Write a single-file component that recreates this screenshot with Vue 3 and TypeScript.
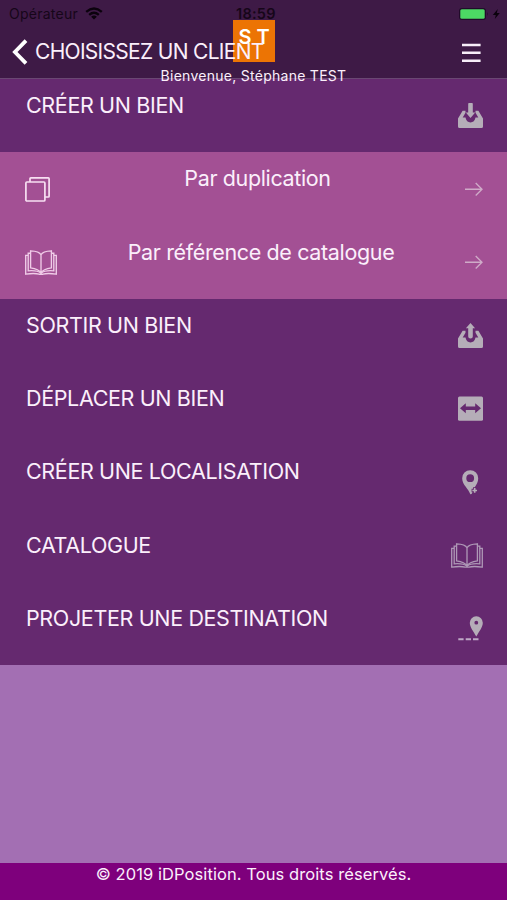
<script setup lang="ts">
type IconName = 'inbox' | 'outbox' | 'move' | 'pin' | 'book' | 'route'

interface SubItem {
  label: string
  icon: 'copy' | 'book'
}

interface MenuItem {
  label: string
  icon: IconName
  children?: SubItem[]
}

const items: MenuItem[] = [
  {
    label: 'CRÉER UN BIEN',
    icon: 'inbox',
    children: [
      { label: 'Par duplication', icon: 'copy' },
      { label: 'Par référence de catalogue', icon: 'book' },
    ],
  },
  { label: 'SORTIR UN BIEN', icon: 'outbox' },
  { label: 'DÉPLACER UN BIEN', icon: 'move' },
  { label: 'CRÉER UNE LOCALISATION', icon: 'pin' },
  { label: 'CATALOGUE', icon: 'book' },
  { label: 'PROJETER UNE DESTINATION', icon: 'route' },
]
</script>

<template>
  <div class="app">
    <header class="header">
      <div class="status">
        <span class="carrier">Opérateur</span>
        <svg class="wifi" width="18" height="13" viewBox="0 0 18 13" fill="none" stroke="#0b020d" stroke-width="2.4">
          <path d="M1.2 4.8Q9-1.8 16.8 4.8M4.2 7.8Q9 3.8 13.8 7.8" />
          <path d="M9 12.5 6.1 9.7Q9 7.4 11.9 9.7Z" fill="#0b020d" stroke="none" />
        </svg>
        <span class="time">18:59</span>
        <svg class="battery" width="45" height="14" viewBox="0 0 45 14">
          <rect x="2" y="1" width="27" height="12" rx="3" fill="#210b2a" />
          <rect x="3.3" y="2.3" width="24.4" height="9.4" rx="1.5" fill="#4cd964" />
          <path d="M30 5q1.5 2 0 4Z" fill="#210b2a" />
          <path d="m40.8 2-5 5.900h3l-1 4.200 5-6h-3Z" fill="#0b020d" />
        </svg>
      </div>
      <div class="nav">
        <svg class="back" width="16" height="26" viewBox="0 0 16 26" fill="none" stroke="#fff" stroke-width="3.8">
          <path d="M14 1.600 2.900 13 14 24.400" />
        </svg>
        <h1 class="title">CHOISISSEZ UN CLIENT</h1>
        <svg class="burger" width="19" height="20" viewBox="0 0 19 20" fill="#f8eef9">
          <path d="M0 .8h18.600v2.500H0zM0 8.600h18.600v2.500H0zM0 16.400h18.600v2.500H0z" />
        </svg>
      </div>
      <div class="avatar">S T</div>
      <p class="welcome">Bienvenue, Stéphane TEST</p>
    </header>

    <main class="menu">
      <template v-for="item in items" :key="item.label">
        <div class="row">
          <span class="label">{{ item.label }}</span>
          <svg v-if="item.icon === 'inbox' || item.icon === 'outbox'" class="icon" width="25" height="25" viewBox="0 0 25 25" fill="#b5adb8">
            <path d="M0 15.500 4.600 7.700h2.900v2.100L4.700 14.500H7.500C8 17.700 9.900 19.400 12.500 19.400S17 17.700 17.500 14.500h2.800L17.500 9.800V7.700h2.900L25 15.500v8q0 1.500-1.500 1.500h-22Q0 25 0 23.500Z" />
            <path v-if="item.icon === 'inbox'" d="M11 0h3q.8 0 .8.800v8.800h2.400L12.500 15 7.800 9.600h2.400V.8Q10.200 0 11 0Z" />
            <path v-else d="m12.500 0 4.600 5.300h-2.300v8.200q0 2-2.300 2t-2.300-2V5.300H7.900Z" />
          </svg>
          <svg v-else-if="item.icon === 'move'" class="icon" width="25" height="25" viewBox="0 0 25 25">
            <rect y=".4" width="25" height="24.400" rx="1.500" fill="#b5adb8" />
            <path d="m2 12.200 5.800-5v3.200h9.400V7.200l5.800 5-5.800 5V14H7.800v3.200Z" fill="#65296f" />
          </svg>
          <svg v-else-if="item.icon === 'pin'" class="icon pin" width="17" height="25" viewBox="0 0 17 25">
            <path fill="#b5adb8" fill-rule="evenodd" d="M8.200.2a8 8 0 0 1 8 8.200c0 3.500-1.800 6.200-3.400 8.800L9.600 24l-1.300.3C7 19 .2 14.700.2 8.400a8 8 0 0 1 8-8.200Zm0 4.100a3.900 3.900 0 1 0 0 7.800 3.900 3.900 0 0 0 0-7.800Z" />
            <path d="M12.700 17.300v6.300M9.600 20.450h6.200" stroke="#65296f" stroke-width="3.400" />
            <path d="M12.700 18.100v4.700M10.350 20.450h4.700" stroke="#b5adb8" stroke-width="1.600" />
          </svg>
          <svg v-else-if="item.icon === 'book'" class="icon" width="32" height="25" viewBox="0 0 32 25" fill="none" stroke="#ae98b6" stroke-width="1.300">
            <path d="M16 4.800C17.300 2 21.500 1 26.400.8v17C21.500 18.400 17.700 19.700 16 23 14.300 19.700 10.500 18.400 5.600 17.800V.8C10.500 1 14.700 2 16 4.800V23" />
            <path d="M5.600 3.200H3.200v17.600c5-.4 9.800-.2 12.800 2.400 3-2.600 7.800-2.800 12.800-2.400V3.200h-2.400" />
            <path d="M3.200 5.400H.7v18.700c5-.7 9.400-1.200 13.300.1h4c3.900-1.300 8.300-.8 13.300-.1V5.400h-2.500" />
          </svg>
          <svg v-else class="icon" width="25" height="25" viewBox="0 0 25 25">
            <path fill="#b5adb8" fill-rule="evenodd" d="M18.300.2a6.500 6.500 0 0 1 6.500 6.600c0 4.500-3.700 8.600-6.500 13.800-2.800-5.200-6.500-9.300-6.500-13.800A6.500 6.500 0 0 1 18.300.2Zm0 4.600a1.900 1.900 0 1 0 0 3.800 1.900 1.900 0 0 0 0-3.800Z" />
            <path d="M.3 23.300h5.300M7.700 23.300H13M15 23.300h5.500" stroke="#bea9c6" stroke-width="2" />
          </svg>
        </div>

        <div v-for="child in item.children" :key="child.label" class="row sub">
          <svg v-if="child.icon === 'copy'" class="icon" width="25" height="25" viewBox="0 0 25 25" fill="none" stroke="#f8dff2" stroke-width="1.700">
            <rect x=".9" y="5" width="19" height="19" rx="1" />
            <path d="M5 5V1.700q0-.8.800-.8h17.500q.8 0 .8.800v17.500q0 .8-.8.800H20" />
          </svg>
          <svg v-else class="icon" width="32" height="25" viewBox="0 0 32 25" fill="none" stroke="#f0cce8" stroke-width="1.350">
            <path d="M16 4.800C17.300 2 21.500 1 26.400.8v17C21.500 18.400 17.700 19.700 16 23 14.300 19.700 10.500 18.400 5.600 17.800V.8C10.500 1 14.700 2 16 4.800V23" />
            <path d="M5.600 3.200H3.200v17.600c5-.4 9.800-.2 12.800 2.400 3-2.600 7.800-2.800 12.800-2.400V3.200h-2.400" />
            <path d="M3.200 5.400H.7v18.700c5-.7 9.400-1.200 13.300.1h4c3.900-1.300 8.300-.8 13.300-.1V5.400h-2.500" />
          </svg>
          <span class="label">{{ child.label }}</span>
          <svg class="icon" width="18" height="25" viewBox="0 0 18 25" fill="none" stroke="#cfabc8" stroke-width="1.350">
            <path d="M0 12.200h17M10.700 5.900l6.300 6.300-6.300 6.300" />
          </svg>
        </div>
      </template>
    </main>

    <footer class="footer">© 2019 iDPosition. Tous droits réservés.</footer>
  </div>
</template>

<style>
body {
  margin: 0;
}
</style>

<style scoped>
.app {
  display: flex;
  flex-direction: column;
  height: 900px;
  overflow: hidden;
  background: #a36fb3;
  color: #fbeffb;
  font-family: Inter, "Liberation Sans", sans-serif;
}

.header {
  position: relative;
  flex: none;
  box-sizing: border-box;
  height: 79px;
  background: #3e1a46;
  border-bottom: 1px solid #6a4773;
}

.status {
  display: flex;
  align-items: center;
  height: 27px;
  padding: 0 5px 0 9px;
  color: #160619;
  font-size: 14px;
  letter-spacing: 0.25px;
}

.wifi {
  margin-left: 7px;
}

.time {
  position: absolute;
  left: 236px;
  top: 5px;
  line-height: 18px;
  font-size: 14.500px;
  font-weight: 600;
}

.battery {
  margin-left: auto;
}

.nav {
  display: flex;
  align-items: center;
  height: 50px;
  padding: 0 26px 0 12px;
}

.title {
  position: relative;
  z-index: 2;
  margin: 0 0 0 7px;
  font-size: 21px;
  font-weight: 400;
  line-height: 30px;
  letter-spacing: -0.7px;
  white-space: nowrap;
}

.burger {
  margin-left: auto;
  margin-top: 2px;
}

.avatar {
  position: absolute;
  left: 233px;
  top: 20px;
  width: 42px;
  height: 42px;
  background: #ec7404;
  color: #fff;
  font-size: 20px;
  font-weight: 600;
  line-height: 34px;
  text-align: center;
}

.welcome {
  position: absolute;
  left: 0;
  right: 0;
  top: 66px;
  z-index: 2;
  margin: 0;
  font-size: 14px;
  line-height: 20px;
  letter-spacing: 0.27px;
  text-align: center;
}

.menu {
  display: flex;
  flex: none;
  flex-direction: column;
}

.row {
  display: flex;
  align-items: flex-start;
  justify-content: space-between;
  box-sizing: border-box;
  height: 73.300px;
  padding: 12px 24px 0 26px;
  background: #65296f;
}

.sub {
  padding-left: 25px;
  background: #a35094;
}

.label {
  font-size: 21.500px;
  line-height: 28px;
  letter-spacing: -0.360px;
  white-space: nowrap;
}

.sub .label {
  flex: 1;
  text-align: center;
}

.icon {
  flex: none;
  margin-top: 12.300px;
}

.pin {
  margin-right: 4px;
}

.footer {
  flex: none;
  box-sizing: border-box;
  height: 37px;
  margin-top: auto;
  background: #7e007c;
  font-size: 16.500px;
  line-height: 22px;
  letter-spacing: 0.080px;
  text-align: center;
}
</style>
